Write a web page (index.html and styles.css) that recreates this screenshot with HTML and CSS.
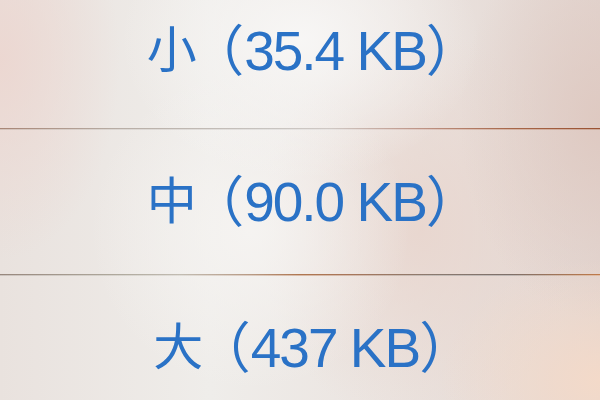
FILE: index.html
```html
<!DOCTYPE html>
<html lang="zh-CN">
<head>
  <meta charset="UTF-8">
  <title>图片大小</title>
  <link rel="stylesheet" href="styles.css">
</head>
<body>
  <div class="sheet">
    <div class="option option-first">
      <span class="label"><span class="han">小</span><span class="paren open">（</span><span class="size">35.4 KB</span><span class="paren">）</span></span>
    </div>
    <div class="divider divider-one"></div>
    <div class="option">
      <span class="label"><span class="han">中</span><span class="paren open">（</span><span class="size">90.0 KB</span><span class="paren">）</span></span>
    </div>
    <div class="divider divider-two"></div>
    <div class="option option-last">
      <span class="label"><span class="han">大</span><span class="paren open">（</span><span class="size">437 KB</span><span class="paren">）</span></span>
    </div>
  </div>
</body>
</html>
```

FILE: styles.css
```css
* {
  box-sizing: border-box;
}

html, body {
  height: 100%;
}

body {
  margin: 0;
  overflow: hidden;
  font-family: 'Liberation Sans', 'Noto Sans CJK SC', sans-serif;
  background-color: #ece6e2;
  background-image:
    radial-gradient(ellipse 180px 140px at 300px 40px, rgba(248,247,246,0.95), rgba(248,247,246,0) 100%),
    radial-gradient(ellipse 160px 160px at 250px 230px, rgba(246,244,242,0.9), rgba(246,244,242,0) 100%),
    radial-gradient(ellipse 160px 120px at 600px 380px, rgba(245,218,200,0.9), rgba(245,218,200,0) 100%),
    radial-gradient(ellipse 140px 200px at 600px 120px, rgba(222,200,192,0.9), rgba(222,200,192,0) 100%),
    radial-gradient(ellipse 120px 200px at 0px 60px, rgba(236,214,208,0.9), rgba(236,214,208,0) 100%),
    radial-gradient(ellipse 160px 200px at 420px 230px, rgba(232,212,204,0.8), rgba(232,212,204,0) 100%),
    linear-gradient(90deg, #e9e2de 0%, #efedea 35%, #ebe4e0 65%, #e3d6d1 100%);
}

.sheet {
  display: flex;
  flex-direction: column;
  height: 100%;
}

.option {
  display: flex;
  justify-content: center;
  align-items: center;
  height: 144px;
  flex-shrink: 0;
}

.option-first {
  height: 128px;
  padding-bottom: 26px;
}

.option-last {
  flex: 1;
  height: auto;
  padding-top: 2px;
  align-items: flex-start;
}

.label {
  color: #2a72c6;
  font-size: 55px;
  line-height: 1;
  white-space: nowrap;
}

.option-last .label {
  margin-top: 43px;
}

.han {
  font-size: 50px;
  vertical-align: 2px;
}

/* half-width brackets so the boxes hug the glyphs */
.paren {
  font-feature-settings: "halt";
}

.paren.open {
  margin-left: 20px;
}

.size {
  letter-spacing: -2px;
}

.divider {
  height: 2px;
  flex-shrink: 0;
  border-bottom: 1px solid rgba(255,255,255,0.5);
}

.divider-one {
  background: linear-gradient(90deg, #a88676 0%, #b8aea6 20%, #c8c4c0 45%, #cfc8c4 55%, #bf9486 70%, #a8684a 85%, #9a5232 100%);
}

.divider-two {
  background: linear-gradient(90deg, #97877d 0%, #b0aa9e 20%, #c2bcb2 30%, #b89a84 42%, #b07650 50%, #a8765a 58%, #8a7a70 72%, #7e706a 85%, #c07a4a 100%);
}
```
